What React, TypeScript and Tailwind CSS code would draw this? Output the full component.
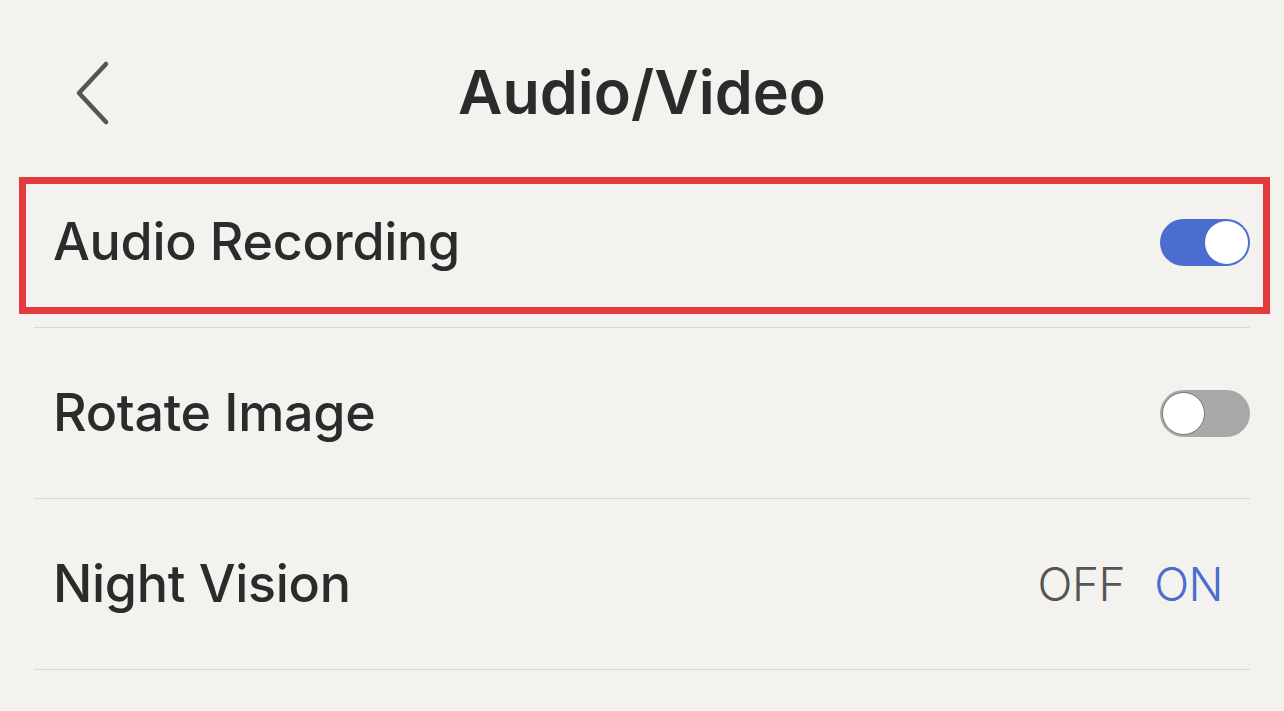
import { useState } from "react";

function Toggle({ on, onChange }: { on: boolean; onChange: () => void }) {
  return (
    <button
      onClick={onChange}
      className={`flex h-[47px] w-[90px] items-center rounded-full p-[2px] ${
        on ? "justify-end bg-[#4a6dcf]" : "justify-start bg-[#a8a8a8]"
      }`}
    >
      <span
        className={`block h-[43px] w-[43px] rounded-full bg-white ${
          on ? "" : "border border-[#777]"
        }`}
      />
    </button>
  );
}

export default function App() {
  const [audio, setAudio] = useState(true);
  const [rotate, setRotate] = useState(false);
  const [night, setNight] = useState(true);

  return (
    <div
      className="min-h-[711px] w-full bg-[#f4f2ee] text-[#2b2b2b]"
      style={{ fontFamily: "Inter, 'Noto Sans', sans-serif" }}
    >
      {/* Header */}
      <header className="relative flex h-[157px] items-center justify-center pt-[27px]">
        <button className="absolute left-[70px] top-[56px] p-1">
          <svg width="36" height="66" viewBox="0 0 36 66" fill="none">
            <path
              d="M32 4 L5 33 L32 62"
              stroke="#555"
              strokeWidth="4.5"
              strokeLinecap="round"
              strokeLinejoin="round"
            />
          </svg>
        </button>
        <h1 className="text-[61px] leading-none font-semibold">Audio/Video</h1>
      </header>

      <div className="mx-[34px]">
        {/* Audio Recording */}
        <div className="relative flex h-[171px] items-center justify-between border-b border-[#dcd9d4] pl-[19px]">
          <span className="text-[52px] leading-none font-medium tracking-[-0.3px]">Audio Recording</span>
          <Toggle on={audio} onChange={() => setAudio(!audio)} />
          <div className="pointer-events-none absolute bottom-[13px] left-[-15px] right-[-20px] top-[20px] border-[7px] border-[#e13b3d]" />
        </div>

        {/* Rotate Image */}
        <div className="flex h-[171px] items-center justify-between border-b border-[#dcd9d4] pl-[19px]">
          <span className="text-[52px] leading-none font-medium tracking-[-0.3px]">Rotate Image</span>
          <Toggle on={rotate} onChange={() => setRotate(!rotate)} />
        </div>

        {/* Night Vision */}
        <div className="flex h-[171px] items-center justify-between border-b border-[#dcd9d4] pl-[19px] pr-[27px]">
          <span className="text-[52px] leading-none font-medium tracking-[-0.3px]">Night Vision</span>
          <div className="flex gap-[29px] text-[46px] leading-none font-light tracking-[-0.5px]">
            <button onClick={() => setNight(false)} className={night ? "text-[#555]" : "text-[#4a6dcf]"}>
              OFF
            </button>
            <button onClick={() => setNight(true)} className={night ? "text-[#4a6dcf]" : "text-[#555]"}>
              ON
            </button>
          </div>
        </div>
      </div>
    </div>
  );
}
